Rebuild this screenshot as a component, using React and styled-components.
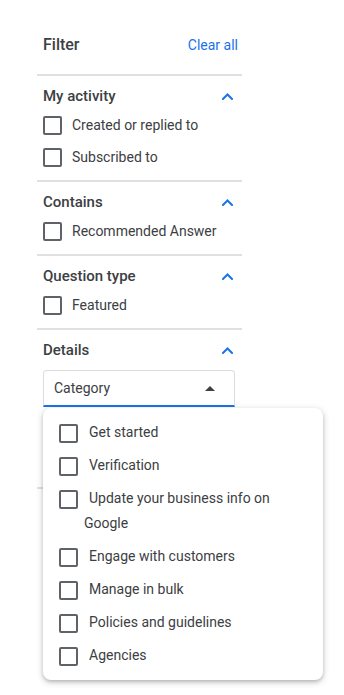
import styled, { createGlobalStyle } from "styled-components";

const GlobalStyle = createGlobalStyle`
  body {
    margin: 0;
    background: #fff;
    font-family: Roboto, "Liberation Sans", Arial, sans-serif;
    color: #3c4043;
  }
`;

const Page = styled.div`
  width: 344px;
  height: 695px;
  padding-left: 37px;
  box-sizing: border-box;
`;

const Panel = styled.div`
  width: 205px;
`;

const Header = styled.div`
  display: flex;
  align-items: center;
  justify-content: space-between;
  padding: 35px 4px 19px 6px;
  line-height: 20px;
  border-bottom: 2px solid #e0e0e0;
`;

const Title = styled.span`
  font-size: 16px;
  font-weight: 500;
  color: #3c4043;
`;

const ClearAll = styled.button`
  border: none;
  background: none;
  padding: 0;
  font: inherit;
  font-size: 14px;
  color: #1a73e8;
  cursor: pointer;
`;

const Section = styled.section`
  padding: 10px 0 ${(p) => p.$bottom || 7}px 6px;
  border-bottom: 2px solid #e0e0e0;
`;

const SectionHead = styled.div`
  display: flex;
  align-items: center;
  justify-content: space-between;
  height: 20px;
  padding-right: 9px;
  margin-bottom: 3px;
  font-size: 15px;
  font-weight: 500;
  color: #3c4043;
`;

const Option = styled.label`
  display: flex;
  align-items: center;
  gap: 10px;
  height: 32px;
  font-size: 14px;
  color: #3c4043;
`;

const Box = styled.span`
  flex: none;
  width: 15px;
  height: 15px;
  border: 2px solid #5f6368;
  border-radius: 2px;
  margin-top: ${(p) => p.$top || 0}px;
`;

const SelectWrap = styled.div`
  position: relative;
  width: 192px;
  margin-top: 10px;
`;

const Select = styled.div`
  display: flex;
  align-items: center;
  justify-content: space-between;
  height: 37px;
  box-sizing: border-box;
  padding: 0 19px 0 10px;
  border: 1px solid #dadce0;
  border-bottom: 2px solid #1a73e8;
  border-radius: 4px 4px 0 0;
  font-size: 14px;
  color: #3c4043;
`;

const Caret = styled.span`
  width: 0;
  height: 0;
  border-left: 5px solid transparent;
  border-right: 5px solid transparent;
  border-bottom: 5px solid #3c4043;
`;

const Menu = styled.div`
  position: absolute;
  top: calc(100% + 1px);
  left: 0;
  width: 280px;
  box-sizing: border-box;
  padding: 8px 0 8px 16px;
  background: #fff;
  border-radius: 8px;
  box-shadow: 0 2px 6px rgba(60, 64, 67, 0.3), 0 2px 3px rgba(60, 64, 67, 0.15);
  z-index: 2;
`;

const MenuItem = styled.label`
  display: flex;
  align-items: flex-start;
  gap: 6px;
  padding: 4px 0;
  font-size: 14px;
  line-height: 25px;
  color: #3c4043;
`;

const MenuText = styled.span`
  text-indent: 5px;
  max-width: 220px;
`;

const Chevron = () => (
  <svg width="11" height="7" viewBox="0 0 11 7" fill="none">
    <polyline
      points="1,6 5.5,1.5 10,6"
      stroke="#1a73e8"
      strokeWidth="2"
      strokeLinecap="square"
    />
  </svg>
);

const sections = [
  { title: "My activity", options: ["Created or replied to", "Subscribed to"] },
  { title: "Contains", options: ["Recommended Answer"] },
  { title: "Question type", options: ["Featured"] },
];

const categories = [
  "Get started",
  "Verification",
  "Update your business info on Google",
  "Engage with customers",
  "Manage in bulk",
  "Policies and guidelines",
  "Agencies",
];

const App = () => {
  return (
    <>
      <GlobalStyle />
      <Page>
        <Panel>
          <Header>
            <Title>Filter</Title>
            <ClearAll>Clear all</ClearAll>
          </Header>
          {sections.map((s) => (
            <Section key={s.title}>
              <SectionHead>
                {s.title}
                <Chevron />
              </SectionHead>
              {s.options.map((o) => (
                <Option key={o}>
                  <Box />
                  {o}
                </Option>
              ))}
            </Section>
          ))}
          <Section $bottom={80}>
            <SectionHead>
              Details
              <Chevron />
            </SectionHead>
            <SelectWrap>
              <Select>
                Category
                <Caret />
              </Select>
              <Menu>
                {categories.map((c) => (
                  <MenuItem key={c}>
                    <Box $top={4} />
                    <MenuText>{c}</MenuText>
                  </MenuItem>
                ))}
              </Menu>
            </SelectWrap>
          </Section>
        </Panel>
      </Page>
    </>
  );
};

export default App;
